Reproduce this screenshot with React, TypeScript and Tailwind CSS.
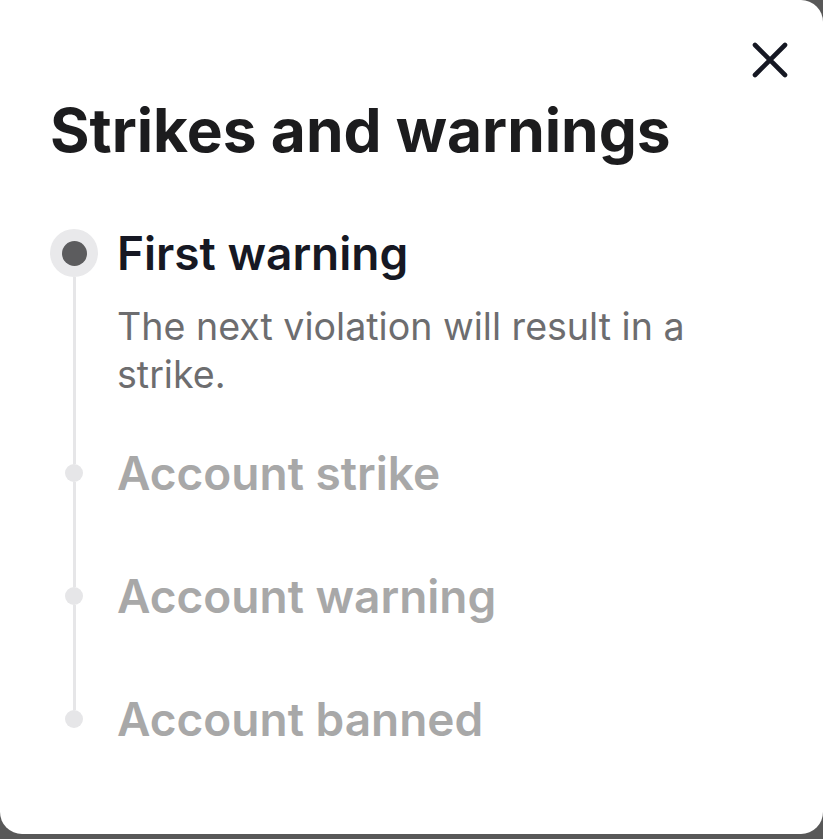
import React from "react";

type Step = { title: string; desc?: string; active?: boolean };

const steps: Step[] = [
  { title: "First warning", desc: "The next violation will result in a strike.", active: true },
  { title: "Account strike" },
  { title: "Account warning" },
  { title: "Account banned" },
];

export default function App() {
  return (
    <div className="min-h-[839px] w-[823px] bg-[#585858]" style={{ fontFamily: "Inter, 'Noto Sans', sans-serif" }}>
      <div className="flex h-[834px] w-[823px] flex-col rounded-tr-[22px] rounded-b-[22px] bg-white pl-[50px] pr-[35px] pt-[42px]">
        <div className="flex h-[36px] justify-end">
          <svg width="36" height="36" viewBox="0 0 36 36" fill="none">
            <path d="M3 3 L33 33 M33 3 L3 33" stroke="#161823" strokeWidth="4.6" strokeLinecap="round" />
          </svg>
        </div>
        <h1 className="mt-[16px] text-[60.4px] font-bold leading-[72px] text-[#1c1c1e]">
          Strikes and warnings
        </h1>
        <div className="mt-[63px] flex flex-col">
          {steps.map((s, i) => {
            const first = i === 0;
            const last = i === steps.length - 1;
            return (
              <div key={s.title} className="grid grid-cols-[48px_1fr] gap-x-[19px]">
                <div className="flex flex-col items-center">
                  {s.active ? (
                    <div className="flex h-[48px] w-[48px] items-center justify-center rounded-full bg-[#e9e9eb]">
                      <div className="h-[25px] w-[25px] rounded-full bg-[#5c5c5e]" />
                    </div>
                  ) : (
                    <>
                      <div className={first ? "h-[15px] w-[3px]" : "h-[15px] w-[3px] bg-[#e6e6e8]"} />
                      <div className="h-[18px] w-[18px] rounded-full bg-[#e6e6e8]" />
                    </>
                  )}
                  {!last && <div className="w-[3px] flex-1 bg-[#e6e6e8]" />}
                </div>
                <div className={first ? "pb-[50px]" : last ? "" : "pb-[75px]"}>
                  <div
                    className={
                      s.active
                        ? "text-[46px] font-semibold leading-[48px] text-[#161823]"
                        : "text-[46px] font-semibold leading-[48px] text-[#a8a8a8]"
                    }
                  >
                    {s.title}
                  </div>
                  {s.desc && (
                    <p className="mt-[26px] max-w-[600px] text-[37.6px] leading-[48px] text-[#6d6d6f]">{s.desc}</p>
                  )}
                </div>
              </div>
            );
          })}
        </div>
      </div>
    </div>
  );
}
